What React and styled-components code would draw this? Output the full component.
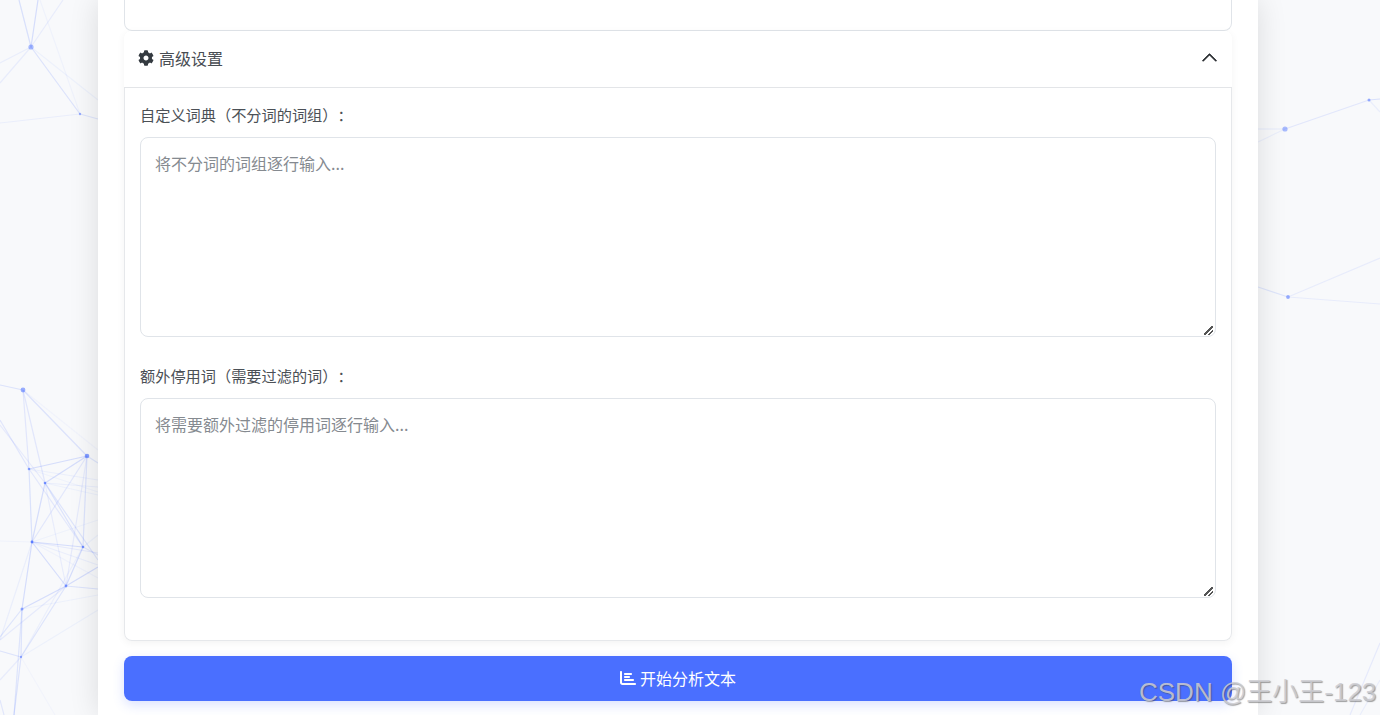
import React from "react";
import styled, { createGlobalStyle } from "styled-components";
import { FaCog } from "react-icons/fa";
import { FaChartBar } from "react-icons/fa6";

const Global = createGlobalStyle`
  html, body { margin: 0; padding: 0; height: 715px; overflow: hidden; background: #f8f9fb; }
  body { font-family: "Noto Sans CJK SC", "Liberation Sans", sans-serif; color: #343a40; text-spacing-trim: space-all; }
  * { box-sizing: border-box; }
`;

const Page = styled.div`
  position: relative;
  height: 715px;
  overflow: hidden;
  display: flex;
  justify-content: center;
  padding: 0 122px 0 98px;
`;
const Network = styled.svg`
  position: absolute;
  inset: 0;
  width: 1380px;
  height: 715px;
  filter: blur(0.35px);
`;
const Panel = styled.main`
  position: relative;
  width: 1160px;
  height: 715px;
  background: #fff;
  padding: 0 26px;
  box-shadow: 0 0 28px rgba(0, 0, 0, 0.12);
  display: flex;
  flex-direction: column;
`;
const PreviousCard = styled.div`
  height: 31px;
  flex: none;
  background: #fff;
  border: 1px solid #e0e4e9;
  border-top: none;
  border-radius: 0 0 8px 8px;
`;
const Accordion = styled.section`
  flex: none;
  background: #fff;
  border-radius: 8px;
  box-shadow: 0 2px 8px rgba(0, 0, 0, 0.05);
`;
const AccordionHeader = styled.button`
  width: 100%;
  height: 57px;
  padding: 0 14px 3px 14px;
  display: flex;
  align-items: center;
  justify-content: space-between;
  background: #fff;
  border: none;
  border-bottom: 1px solid #e3e5e8;
  border-radius: 8px 8px 0 0;
  font: 400 16px/24px "Noto Sans CJK SC", "Liberation Sans", sans-serif;
  color: #484d53;
`;
const HeaderTitle = styled.span`
  display: flex;
  align-items: center;
  gap: 5px;
`;
const AccordionBody = styled.div`
  height: 553px;
  padding: 16px 15px 0;
  border: 1px solid #e6e8eb;
  border-top: none;
  border-radius: 0 0 8px 8px;
  display: flex;
  flex-direction: column;
`;
const Label = styled.label`
  display: block;
  font-size: 15.2px;
  line-height: 20px;
  height: 24px;
  margin-bottom: 9px;
  color: #4b5056;
`;
const TextArea = styled.textarea`
  display: block;
  width: 100%;
  height: 200px;
  flex: none;
  padding: 13px 14px;
  margin-bottom: 28px;
  background: #fff;
  border: 1px solid #e0e4e9;
  border-radius: 8px;
  outline: none;
  font: 400 16px/24px "Noto Sans CJK SC", "Liberation Sans", sans-serif;
  color: #212529;
  &::placeholder { color: #858a90; opacity: 1; }
  &::-webkit-resizer {
    background: linear-gradient(135deg, transparent 0 43%, #555 43% 57%, transparent 57% 68%, #555 68% 80%, transparent 80%) no-repeat right 2px bottom 1px / 9px 9px;
  }
`;
const SubmitButton = styled.button`
  flex: none;
  height: 45px;
  margin-top: 15px;
  width: 100%;
  padding-bottom: 2px;
  display: flex;
  align-items: center;
  justify-content: center;
  gap: 4px;
  background: #4a6fff;
  color: #fff;
  border: none;
  border-radius: 8px;
  font: 400 16px/24px "Noto Sans CJK SC", "Liberation Sans", sans-serif;
  box-shadow: 0 4px 12px rgba(74, 111, 255, 0.2);
`;
const Watermark = styled.div`
  position: absolute;
  left: 1139px;
  top: 674px;
  font: 400 26px/36px "Liberation Sans", "Noto Sans CJK SC", sans-serif;
  white-space: nowrap;
  color: rgba(205, 205, 210, 0.85);
  text-shadow: 1px 1px 1px rgba(70, 70, 70, 0.5);
`;

const nodes = [
  [31, 47, 2.6, 0.45], [80, 114, 1.2, 0.5], [1285, 129, 2.6, 0.45], [1369, 100, 1.5, 0.55], [1288, 297, 1.9, 0.55],
  [23, 390, 2.4, 0.55], [87, 456, 2.3, 0.65], [29, 469, 1.3, 0.6], [45, 483, 1.3, 0.7], [32, 542, 1.4, 0.85],
  [83, 547, 1.3, 0.7], [66, 586, 1.4, 0.65], [22, 609, 1.5, 0.55], [21, 657, 1.2, 0.5],
];
const lines = [
  [31, 47, 19, 0, 0.18], [31, 47, 38, 0, 0.2], [31, 47, 63, 0, 0.09], [31, 47, 0, 63, 0.08], [31, 47, 0, 83, 0.09],
  [31, 47, 80, 114, 0.16], [31, 47, 98, 100, 0.06], [40, 0, 80, 114, 0.05], [80, 114, 0, 123, 0.08], [80, 114, 98, 119, 0.14],
  [1285, 129, 1369, 100, 0.12], [1285, 129, 1258, 129, 0.08], [1285, 129, 1258, 142, 0.07], [1369, 100, 1380, 99, 0.18],
  [1369, 100, 1380, 112, 0.08], [1288, 297, 1258, 287, 0.14], [1288, 297, 1380, 258, 0.09], [1288, 297, 1380, 304, 0.09],
  [1380, 643, 1350, 715, 0.1], [1380, 680, 1360, 715, 0.08],
  [0, 385, 23, 390, 0.16], [23, 390, 87, 456, 0.16], [23, 390, 29, 469, 0.13], [23, 390, 45, 483, 0.13],
  [0, 420, 29, 469, 0.13], [0, 425, 45, 483, 0.1], [87, 456, 29, 469, 0.2], [87, 456, 45, 483, 0.2],
  [87, 456, 83, 547, 0.16], [87, 456, 32, 542, 0.12], [87, 456, 98, 463, 0.14], [23, 390, 98, 450, 0.04],
  [29, 469, 32, 542, 0.17], [29, 469, 98, 480, 0.07], [29, 469, 98, 492, 0.05], [29, 469, 83, 547, 0.12],
  [45, 483, 32, 542, 0.2], [45, 483, 98, 487, 0.08], [45, 483, 98, 495, 0.06], [45, 483, 83, 547, 0.16], [45, 483, 98, 560, 0.15], [45, 483, 66, 586, 0.09],
  [87, 456, 66, 586, 0.1], [32, 542, 83, 547, 0.2], [32, 542, 66, 586, 0.2], [32, 542, 22, 609, 0.2], [32, 542, 98, 553, 0.1],
  [32, 542, 98, 565, 0.08], [32, 542, 98, 520, 0.05], [0, 541, 32, 542, 0.05], [32, 542, 98, 578, 0.05], [32, 542, 0, 640, 0.08],
  [83, 547, 66, 586, 0.2], [83, 547, 98, 555, 0.12], [83, 547, 21, 657, 0.07], [83, 547, 98, 535, 0.06],
  [66, 586, 22, 609, 0.2], [66, 586, 98, 567, 0.2], [66, 586, 98, 589, 0.16], [66, 586, 21, 657, 0.15], [66, 586, 0, 640, 0.1],
  [22, 609, 21, 657, 0.16], [22, 609, 0, 637, 0.15], [22, 609, 98, 595, 0.06], [22, 609, 14, 715, 0.15],
  [0, 651, 21, 657, 0.16], [21, 657, 14, 715, 0.16], [21, 657, 0, 680, 0.09], [21, 657, 98, 610, 0.06], [0, 700, 4, 715, 0.12], [21, 657, 55, 715, 0.03],
];

const Chevron = () => (
  <svg width="17" height="17" viewBox="0 0 16 16" fill="#212529" stroke="#212529" strokeWidth="0.7">
    <path
      transform="rotate(180 8 8)"
      fillRule="evenodd"
      d="M1.646 4.646a.5.5 0 0 1 .708 0L8 10.293l5.646-5.647a.5.5 0 0 1 .708.708l-6 6a.5.5 0 0 1-.708 0l-6-6a.5.5 0 0 1 0-.708z"
    />
  </svg>
);

export default function App() {
  return (
    <>
      <Global />
      <Page>
        <Network viewBox="0 0 1380 715">
          {lines.map(([x1, y1, x2, y2, o], i) => (
            <line key={i} x1={x1} y1={y1} x2={x2} y2={y2} stroke="#4a6fff" strokeOpacity={o} strokeWidth="1.2" />
          ))}
          {nodes.map(([cx, cy, r, o], i) => (
            <circle key={i} cx={cx} cy={cy} r={r} fill="#4a6fff" fillOpacity={o} />
          ))}
        </Network>
        <Panel>
          <PreviousCard />
          <Accordion>
            <AccordionHeader type="button">
              <HeaderTitle>
                <FaCog size={16} color="#343a40" />
                高级设置
              </HeaderTitle>
              <Chevron />
            </AccordionHeader>
            <AccordionBody>
              <Label>自定义词典（不分词的词组）：</Label>
              <TextArea placeholder="将不分词的词组逐行输入..." />
              <Label>额外停用词（需要过滤的词）：</Label>
              <TextArea placeholder="将需要额外过滤的停用词逐行输入..." />
            </AccordionBody>
          </Accordion>
          <SubmitButton type="button">
            <FaChartBar size={16} />
            开始分析文本
          </SubmitButton>
        </Panel>
        <Watermark>CSDN @王小王-123</Watermark>
      </Page>
    </>
  );
}
